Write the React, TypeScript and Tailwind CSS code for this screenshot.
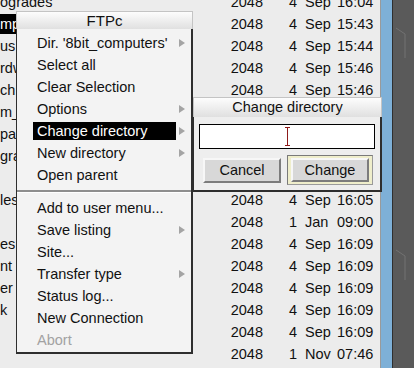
import clsx from 'clsx'

interface Row {
  name: string
  day: string
  month: string
  time: string
  selected?: boolean
  covered?: boolean
}

const rows: Row[] = [
  { name: 'ogrades', day: '4', month: 'Sep', time: '16:04' },
  { name: 'mp', day: '4', month: 'Sep', time: '15:43', selected: true },
  { name: 'us', day: '4', month: 'Sep', time: '15:44' },
  { name: 'rdw', day: '4', month: 'Sep', time: '15:46' },
  { name: 'ch', day: '4', month: 'Sep', time: '15:46' },
  { name: 'm_', day: '', month: '', time: '', covered: true },
  { name: 'pai', day: '', month: '', time: '', covered: true },
  { name: 'gra', day: '', month: '', time: '', covered: true },
  { name: '', day: '', month: '', time: '', covered: true },
  { name: 'les', day: '4', month: 'Sep', time: '16:05' },
  { name: '', day: '1', month: 'Jan', time: '09:00' },
  { name: 'es', day: '4', month: 'Sep', time: '16:09' },
  { name: 'nt', day: '4', month: 'Sep', time: '16:09' },
  { name: 'er', day: '4', month: 'Sep', time: '16:09' },
  { name: 'k', day: '4', month: 'Sep', time: '16:09' },
  { name: '', day: '4', month: 'Sep', time: '16:09' },
  { name: '', day: '1', month: 'Nov', time: '07:46' },
]

type Item = { label: string; arrow?: boolean; active?: boolean; disabled?: boolean } | 'sep'

const menuItems: Item[] = [
  { label: "Dir. '8bit_computers'", arrow: true },
  { label: 'Select all' },
  { label: 'Clear Selection' },
  { label: 'Options', arrow: true },
  { label: 'Change directory', arrow: true, active: true },
  { label: 'New directory', arrow: true },
  { label: 'Open parent' },
  'sep',
  { label: 'Add to user menu...' },
  { label: 'Save listing', arrow: true },
  { label: 'Site...' },
  { label: 'Transfer type', arrow: true },
  { label: 'Status log...' },
  { label: 'New Connection' },
  { label: 'Abort', disabled: true },
]

function Arrow() {
  return (
    <svg width="6" height="8" viewBox="0 0 6 8">
      <path d="M0 0L6 4L0 8Z" fill="#a4a4a4" />
    </svg>
  )
}

function FileRow({ row }: { row: Row }) {
  return (
    <div className="flex h-[22px] shrink-0 items-center text-[#111]">
      <div className="w-[223px] overflow-hidden whitespace-nowrap">
        <span
          className={clsx(
            'inline-flex h-[20px] items-center',
            row.selected ? 'w-[40px] bg-black text-white' : ''
          )}
        >
          {row.name}
        </span>
      </div>
      {!row.covered && (
        <>
          <div className="w-[40px] text-right">2048</div>
          <div className="w-[34px] text-right">{row.day}</div>
          <div className="ml-[8px] w-[32px]">{row.month}</div>
          <div className="w-[36px] text-right">{row.time}</div>
        </>
      )}
    </div>
  )
}

function FtpMenu() {
  return (
    <div className="absolute left-[16px] top-[11px] w-[177px]">
      <div className="flex h-[18px] items-center justify-center border-x border-t border-[#c4c4c4] bg-linear-to-b from-[#fdfdfd] to-[#e0e0e0] text-[15px] text-[#111]">
        FTPc
      </div>
      <div className="border-b-2 border-l border-r-2 border-[#2e2e2e] bg-[#f3f3f3] pb-[1px] pt-[3px]">
        {menuItems.map((item, i) =>
          item === 'sep' ? (
            <div key={i} className="flex h-[11px] flex-col justify-center">
              <div className="h-[2px] bg-[#8e8e8e]" />
              <div className="h-[1px] bg-white" />
            </div>
          ) : (
            <div key={i} className="flex h-[22px] items-center pl-[16px]">
              <div
                className={clsx(
                  'flex h-[18px] w-[143px] items-center whitespace-nowrap pl-[4px]',
                  item.active ? 'bg-black text-white' : item.disabled ? 'text-[#a2a2a2]' : 'text-[#111]'
                )}
              >
                {item.label}
              </div>
              {item.arrow && (
                <div className="ml-[3px] flex items-center">
                  <Arrow />
                </div>
              )}
            </div>
          )
        )}
      </div>
    </div>
  )
}

function ChangeDirDialog() {
  return (
    <div className="absolute left-[193px] top-[97px] w-[189px]">
      <div className="flex h-[20px] items-center justify-center border-x border-t border-[#c4c4c4] bg-linear-to-b from-[#fdfdfd] to-[#e0e0e0] text-[#111]">
        Change directory
      </div>
      <div className="border-b-2 border-l border-r-2 border-[#2e2e2e] bg-[#eeeeee] pb-[5px] pt-[7px]">
        <div className="ml-[5px] flex h-[25px] w-[176px] items-center justify-center border border-black bg-white">
          <svg width="5" height="19" viewBox="0 0 5 19">
            <path d="M0 0.5H5M2.5 0.5V18.5M0 18.5H5" stroke="#8e1b1b" strokeWidth="1" fill="none" />
          </svg>
        </div>
        <div className="mt-[6px] flex h-[30px] items-start">
          <button className="ml-[9px] mt-[3px] flex h-[25px] w-[78px] items-center justify-center border-2 border-b-[#7c7c7c] border-l-[#f7f7f7] border-r-[#7c7c7c] border-t-[#f7f7f7] bg-[#d8d8d8] text-[#111]">
            Cancel
          </button>
          <div className="ml-[6px] flex h-[30px] w-[86px] items-center justify-center border border-b-[#9a9a9a] border-l-[#7a7a7a] border-r-[#9a9a9a] border-t-[#7a7a7a] bg-[#efeecb]">
            <button className="flex h-[24px] w-[78px] items-center justify-center border-2 border-b-[#7c7c7c] border-l-[#f7f7f7] border-r-[#7c7c7c] border-t-[#f7f7f7] bg-[#d8d8d8] text-[#111]">
              Change
            </button>
          </div>
        </div>
      </div>
    </div>
  )
}

export default function App() {
  return (
    <div className="relative flex h-[368px] w-[414px] overflow-hidden font-['Liberation_Sans',Arial,sans-serif] text-[14.5px] leading-none">
      <div className="flex w-[380px] flex-col overflow-hidden bg-[#ececec] pr-[7px]">
        <div className="-mt-[9px] flex flex-col">
          {rows.map((row, i) => (
            <FileRow key={i} row={row} />
          ))}
        </div>
      </div>
      <div className="w-[1px] bg-[#9a9a9a]" />
      <div className="w-[11px] bg-[#7eb0d7]" />
      <div className="w-[1px] bg-[#2f2f2f]" />
      <div className="flex-1 bg-[#5a5a5a]">
        <svg width="20" height="368" viewBox="0 0 20 368">
          <path d="M3 28L12 34V58M3 250L12 256V280" stroke="#727272" strokeWidth="1" fill="none" />
        </svg>
      </div>
      <FtpMenu />
      <ChangeDirDialog />
    </div>
  )
}
